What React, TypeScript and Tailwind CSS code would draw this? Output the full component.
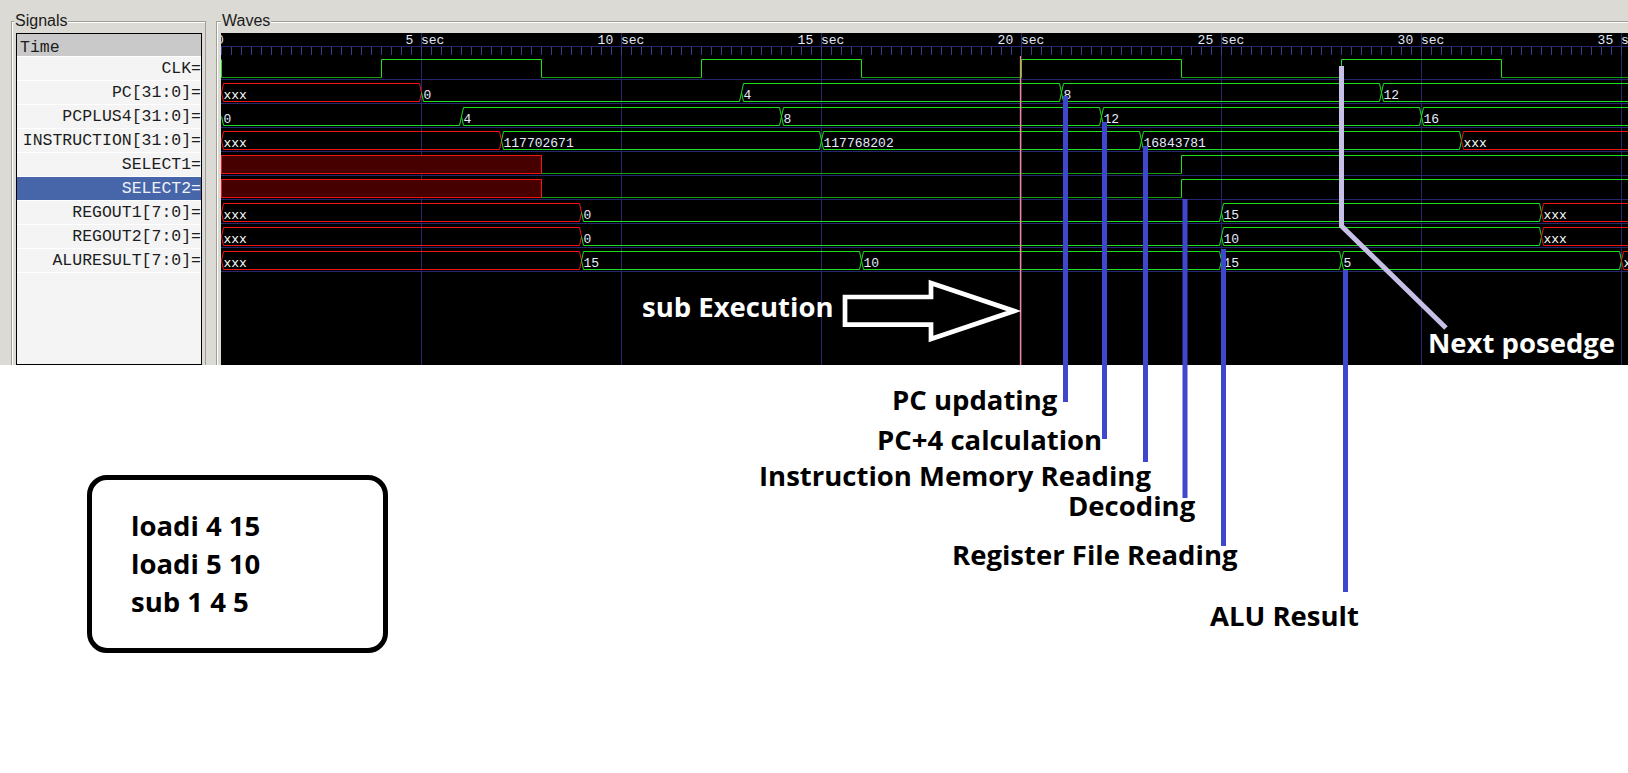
import React from "react";

type Seg = { a: number; b: number; v: string; x?: boolean };
type Row = { name: string; kind: "clk" | "bus" | "bit"; segs?: Seg[] };

// 5 sec = 200px, first sample at x=221
const tx = (t: number) => 221 + 40 * t;
const END = 1660;

const ROWS: Row[] = [
  { name: "CLK", kind: "clk" },
  {
    name: "PC[31:0]",
    kind: "bus",
    segs: [
      { a: 0, b: 5, v: "xxx", x: true },
      { a: 5, b: 13, v: "0" },
      { a: 13, b: 21, v: "4" },
      { a: 21, b: 29, v: "8" },
      { a: 29, b: 99, v: "12" },
    ],
  },
  {
    name: "PCPLUS4[31:0]",
    kind: "bus",
    segs: [
      { a: 0, b: 6, v: "0" },
      { a: 6, b: 14, v: "4" },
      { a: 14, b: 22, v: "8" },
      { a: 22, b: 30, v: "12" },
      { a: 30, b: 99, v: "16" },
    ],
  },
  {
    name: "INSTRUCTION[31:0]",
    kind: "bus",
    segs: [
      { a: 0, b: 7, v: "xxx", x: true },
      { a: 7, b: 15, v: "117702671" },
      { a: 15, b: 23, v: "117768202" },
      { a: 23, b: 31, v: "16843781" },
      { a: 31, b: 99, v: "xxx", x: true },
    ],
  },
  { name: "SELECT1", kind: "bit" },
  { name: "SELECT2", kind: "bit" },
  {
    name: "REGOUT1[7:0]",
    kind: "bus",
    segs: [
      { a: 0, b: 9, v: "xxx", x: true },
      { a: 9, b: 25, v: "0" },
      { a: 25, b: 33, v: "15" },
      { a: 33, b: 99, v: "xxx", x: true },
    ],
  },
  {
    name: "REGOUT2[7:0]",
    kind: "bus",
    segs: [
      { a: 0, b: 9, v: "xxx", x: true },
      { a: 9, b: 25, v: "0" },
      { a: 25, b: 33, v: "10" },
      { a: 33, b: 99, v: "xxx", x: true },
    ],
  },
  {
    name: "ALURESULT[7:0]",
    kind: "bus",
    segs: [
      { a: 0, b: 9, v: "xxx", x: true },
      { a: 9, b: 16, v: "15" },
      { a: 16, b: 25, v: "10" },
      { a: 25, b: 28, v: "15" },
      { a: 28, b: 35, v: "5" },
      { a: 35, b: 99, v: "xxx", x: true },
    ],
  },
];

const GREEN = "#1fe01f";
const DKGREEN = "#12a012";
const RED = "#f01414";
const GRID = "#262670";

const rowTop = (i: number) => 57 + 24 * i;

function busShape(a: number, b: number, top: number, zero: boolean) {
  const m = top + 11.5;
  const t = top + 2.5;
  const bt = top + 20.5;
  if (zero) return `M${a} ${m}L${a + 2} ${bt}H${b - 2}L${b} ${m}`;
  return `M${a} ${m}L${a + 2} ${t}H${b - 2}L${b} ${m}L${b - 2} ${bt}H${a + 2}Z`;
}

function WaveRow({ row, i }: { row: Row; i: number }) {
  const top = rowTop(i);
  const hi = top + 2.5;
  const lo = top + 20.5;

  if (row.kind === "clk") {
    const edges = [0, 4, 8, 12, 16, 20, 24, 28, 32, 36, 40];
    return (
      <g>
        {edges.slice(0, -1).map((e, k) => (
          <line
            key={"h" + k}
            x1={tx(e) + 0.5}
            x2={tx(edges[k + 1]) + 0.5}
            y1={k % 2 === 0 ? lo : hi}
            y2={k % 2 === 0 ? lo : hi}
            stroke={k % 2 === 0 ? DKGREEN : GREEN}
          />
        ))}
        {edges.map((e, k) => (
          <line key={"v" + k} x1={tx(e) + 0.5} x2={tx(e) + 0.5} y1={hi} y2={lo} stroke={GREEN} />
        ))}
      </g>
    );
  }

  if (row.kind === "bit") {
    return (
      <g>
        <rect x={221.5} y={hi} width={320} height={18} fill="#460000" stroke={RED} />
        <path d={`M${tx(8) + 0.5} ${lo}H${tx(24) + 0.5}`} stroke={DKGREEN} fill="none" />
        <path d={`M${tx(24) + 0.5} ${lo}V${hi}H${END}`} stroke={GREEN} fill="none" />
      </g>
    );
  }

  return (
    <g>
      {row.segs!.map((s, k) => {
        const a = tx(s.a) + 0.5;
        const b = Math.min(tx(s.b), END) + 0.5;
        return (
          <g key={k}>
            <path
              d={busShape(a, b, top, s.v === "0")}
              stroke={s.x ? RED : GREEN}
              fill="none"
            />
            <text
              x={a + 2}
              y={top + 17.5}
              fontFamily="'Liberation Mono', monospace"
              fontSize={13}
              fill={s.x ? "#ffffff" : "#e6ecff"}
            >
              {s.v}
            </text>
          </g>
        );
      })}
    </g>
  );
}

function Waves() {
  const ticks: number[] = [];
  for (let x = 221; x < 1628; x += 10) ticks.push(x);
  const majors = [1, 2, 3, 4, 5, 6, 7];
  return (
    <svg className="block" width={1407} height={332} viewBox="221 33 1407 332">
      <rect x={221} y={33} width={1407} height={332} fill="#000" />
      {majors.map((k) => (
        <line key={k} x1={221.5 + 200 * k} x2={221.5 + 200 * k} y1={33} y2={365} stroke={GRID} />
      ))}
      {ROWS.map((_, k) => (
        <line key={k} x1={221} x2={1628} y1={79.5 + 24 * k} y2={79.5 + 24 * k} stroke={GRID} />
      ))}
      <line x1={221} x2={1628} y1={46.5} y2={46.5} stroke={GRID} />
      {ticks.map((x) => (
        <line key={x} x1={x + 0.5} x2={x + 0.5} y1={47} y2={55} stroke="#3b3b90" />
      ))}
      <text x={216} y={44} fontFamily="'Liberation Mono', monospace" fontSize={13} fill="#e4e8f8">
        0
      </text>
      {majors.map((k) => {
        const label = `${5 * k} sec`;
        const digits = String(5 * k).length;
        return (
          <text
            key={k}
            x={221 + 200 * k - (digits + 1) * 7.8}
            y={44}
            fontFamily="'Liberation Mono', monospace"
            fontSize={13}
            fill="#e4e8f8"
            xmlSpace="preserve"
          >
            {label}
          </text>
        );
      })}
      {ROWS.map((r, i) => (
        <WaveRow key={r.name} row={r} i={i} />
      ))}
      <line x1={1020.5} x2={1020.5} y1={56} y2={365} stroke="#ff8585" strokeWidth={1.3} />
    </svg>
  );
}

const LABELS: { text: string; left: number; top: number; white?: boolean }[] = [
  { text: "sub Execution", left: 642, top: 293, white: true },
  { text: "Next posedge", left: 1428, top: 329, white: true },
  { text: "PC updating", left: 892, top: 386 },
  { text: "PC+4 calculation", left: 877, top: 426 },
  { text: "Instruction Memory Reading", left: 759, top: 462 },
  { text: "Decoding", left: 1068, top: 492 },
  { text: "Register File Reading", left: 952, top: 541 },
  { text: "ALU Result", left: 1210, top: 602 },
];

export default function App() {
  return (
    <div className="relative w-[1628px] h-[773px] bg-white overflow-hidden">
      {/* gtkwave window */}
      <div className="h-[365px] bg-[#dcdad5] flex overflow-hidden">
        <div className="relative ml-[11px] mt-[21px] w-[195px] shrink-0 border border-b-0 border-[#a29e96] pl-[4px] pr-[3px] pt-[11px] shadow-[inset_1px_1px_0_#ffffff]">
          <span className="absolute -top-[9px] left-[2px] bg-[#dcdad5] px-[1px] font-['Liberation_Sans'] text-[16px] leading-none text-[#1a1a1a]">
            Signals
          </span>
          <div className="h-full border border-black bg-[#f4f4f4] font-['Liberation_Mono'] text-[16.5px] leading-none text-[#1c1c1c]">
            <div className="h-[23px] bg-[#c9c9c9] border-b border-white pl-[3px] pt-[7px] flex items-center">
              Time
            </div>
            {ROWS.map((r) => (
              <div
                key={r.name}
                className={
                  r.name === "SELECT2"
                    ? "h-[24px] border-b border-white bg-[#4766a9] text-[#eef1f8] pt-[2px] flex items-center justify-end whitespace-pre"
                    : "h-[24px] border-b border-white pt-[2px] flex items-center justify-end whitespace-pre"
                }
              >
                {r.name}=
              </div>
            ))}
          </div>
        </div>
        <div className="w-[10px] shrink-0" />
        <div className="relative flex-1 min-w-0 mt-[21px] border-l border-t border-[#a29e96] pl-[4px] pt-[11px] shadow-[inset_1px_1px_0_#ffffff]">
          <span className="absolute -top-[9px] left-[4px] bg-[#dcdad5] px-[1px] font-['Liberation_Sans'] text-[16px] leading-none text-[#1a1a1a]">
            Waves
          </span>
          <Waves />
        </div>
      </div>

      {/* program listing */}
      <div className="ml-[87px] mt-[110px] w-[301px] h-[178px] border-[5px] border-black rounded-[20px] pl-[39px] pt-[27px] font-['Open_Sans'] font-bold text-[27.5px] leading-[38px] text-black">
        <div>loadi 4 15</div>
        <div>loadi 5 10</div>
        <div>sub 1 4 5</div>
      </div>

      {/* paint annotations */}
      <svg className="absolute inset-0 pointer-events-none" width={1628} height={773}>
        <g stroke="#3f48cc" strokeWidth={5}>
          <line x1={1065.5} x2={1065.5} y1={96} y2={402} />
          <line x1={1104.5} x2={1104.5} y1={122} y2={439} />
          <line x1={1145.5} x2={1145.5} y1={146} y2={462} />
          <line x1={1185} x2={1185} y1={199} y2={498} />
          <line x1={1223.5} x2={1223.5} y1={249} y2={546} />
          <line x1={1345.5} x2={1345.5} y1={270} y2={592} />
        </g>
        <polyline
          points="1341.5,66 1341.5,226 1446,328"
          fill="none"
          stroke="#c8bfe7"
          strokeWidth={5}
          strokeLinejoin="miter"
        />
        <polygon
          points="845,297 931,297 931,283 1014,311 931,339 931,324.7 845,324.7"
          fill="none"
          stroke="#ffffff"
          strokeWidth={4.7}
        />
      </svg>
      {LABELS.map((l) => (
        <div
          key={l.text}
          className={
            l.white
              ? "absolute whitespace-nowrap font-['Open_Sans'] font-bold text-[27.5px] leading-none text-white"
              : "absolute whitespace-nowrap font-['Open_Sans'] font-bold text-[27.5px] leading-none text-black"
          }
          style={{ left: l.left, top: l.top }}
        >
          {l.text}
        </div>
      ))}
    </div>
  );
}
